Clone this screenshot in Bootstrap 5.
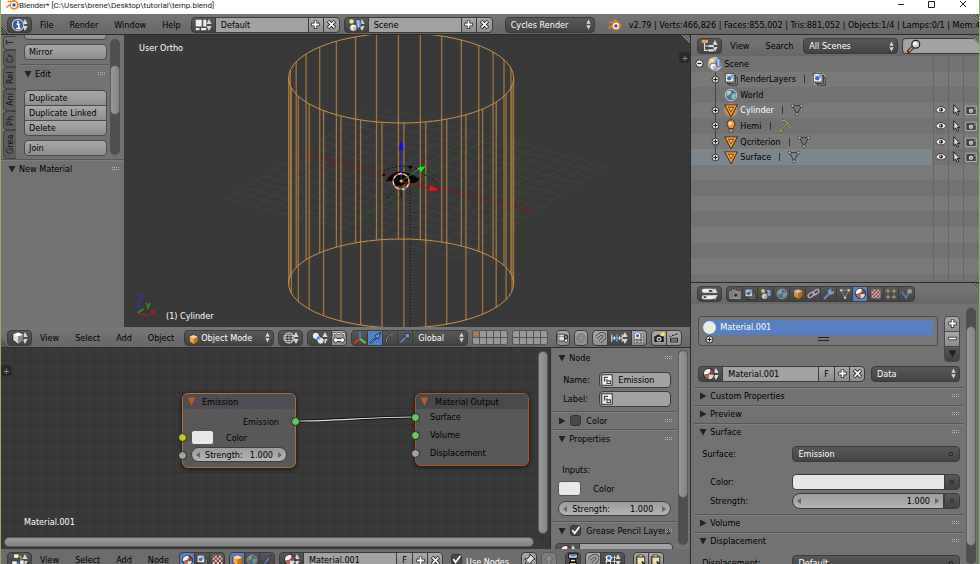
<!DOCTYPE html>
<html lang="en">
<head>
<meta charset="utf-8">
<meta name="viewport" content="width=device-width, initial-scale=1">
<title>Blender</title>
<link href="https://cdn.jsdelivr.net/npm/bootstrap@5.3.0/dist/css/bootstrap.min.css" rel="stylesheet">
<style>
:root{--panel:#727272;--dark:#393939;--edge:#2b2b2b;
--updown:url("data:image/svg+xml,%3Csvg xmlns='http://www.w3.org/2000/svg' viewBox='0 0 6 12'%3E%3Cpath d='M3 0 5.6 5H.4zM3 12 .4 7h5.2z' fill='%23d8d8d8'/%3E%3C/svg%3E");
--tick:url("data:image/svg+xml,%3Csvg xmlns='http://www.w3.org/2000/svg' viewBox='0 0 12 12'%3E%3Cpath d='M2.500 5.500 5 9l6-8' fill='none' stroke='%23fff' stroke-width='1.8'/%3E%3C/svg%3E");
--grip:url("data:image/svg+xml,%3Csvg xmlns='http://www.w3.org/2000/svg' width='8' height='4' shape-rendering='crispEdges'%3E%3Cpath d='M0 0h1v1H0zM2 0h1v1H2zM4 0h1v1H4zM6 0h1v1H6zM0 2h1v1H0zM2 2h1v1H2zM4 2h1v1H4zM6 2h1v1H6z' fill='%23b4b4b4'/%3E%3C/svg%3E")}
body{height:100vh;overflow:hidden;background:var(--panel);color:#000;font:9px/12px "DejaVu Sans Condensed","DejaVu Sans",sans-serif;border-left:1px solid #8fb35c;border-right:1px solid #8fb35c}
svg{display:block;flex:none}
.ic{width:14px;height:14px}
.titlebar{height:14px;background:#fff;font:8px/11px Roboto,"Open Sans",sans-serif;color:#222;overflow:hidden}
.logo{margin-top:-3px}
.winbtn{border:0;background:none;padding:0;width:31px;height:12px}
.hdr{height:21px;background:linear-gradient(#767676,#686868);border-bottom:1px solid var(--edge);padding:1px 6px 0;white-space:nowrap;overflow:hidden;position:relative}
.hdr.cut{height:15px;align-items:flex-start!important;padding-top:3px;border:0;background:#6c6c6c}
.menu{gap:16px;margin:0 10px 0 8px}
.menu a{color:#000;text-decoration:none;line-height:16px}
.bl{height:16px;border:1px solid #3c3c3c;border-radius:4px;padding:0 5px;background:linear-gradient(#a9a9a9,#8e8e8e);color:#000;font:inherit;line-height:14px;text-align:left;display:flex;align-items:center;min-width:0;flex:none}
.bl.sq{width:16px;padding:0;justify-content:center}
.bl.nar{width:14px}
.bl.wd{width:17px}
.bl.dk{background:linear-gradient(#585858,#434343);color:#fff}
.bl.on{background:#5680c2}
.bl.off{background:#7c7c7c;border-color:#5a5a5a}
.bl.ed{width:25px;padding:0 2px 0 3px;justify-content:space-between;background:var(--updown) right 3px center/6px 12px no-repeat,linear-gradient(#585858,#434343)}
select.bl{appearance:none;color:#fff;background:var(--updown) right 3px center/5px 11px no-repeat,linear-gradient(#585858,#434343);display:block}
.bl.grow{flex:1 1 0}
.w-name{width:94px}.w-mode{width:90px}.w-orient{width:56px}.w-all{width:95px}.w-data{width:34%}
select.w-mode.icn{padding-left:16px}
.fld{background:#a2a2a2}
.grp{display:flex;flex:none}
.grp>.bl{border-radius:0;margin-right:-1px}
.grp>.bl:first-child{border-radius:4px 0 0 4px}
.grp>.bl:last-child{border-radius:0 4px 4px 0;margin-right:0}
.gap12{margin-left:12px}
.cover{flex:1 1 0;min-width:0;min-height:0}
.leftcol{flex:690 1 0;min-width:0}
.rightcol{flex:288 1 0;min-width:0;border-left:1px solid var(--edge)}
.area3d{flex:292 1 0;min-height:0}
.areanode{flex:201 1 0;min-height:0}
.areatree{flex:247 1 0;min-height:0}
.areaprops{flex:282 1 0;min-height:0;border-top:1px solid var(--edge)}
.shelf{width:123px;flex:none;background:var(--panel)}
.tools{height:124px;overflow:hidden}
.vtabs{width:15px;padding:1px 0 0 2px}
.vtab{writing-mode:vertical-rl;transform:rotate(180deg);border:1px solid #444;border-left:0;border-radius:0 4px 4px 0;background:#5d5d5d;color:#111;padding:0;width:13px;height:17px;flex:none;text-align:center;font:inherit;line-height:11px}
.vtab.active{background:var(--panel);height:14px}
.vtab.h22{height:22px}.vtab.h19{height:19px}.vtab.h28{height:29px}
.stackb{width:83px}
.stackb .bl{width:100%;border-radius:0;margin-bottom:-1px;border-color:#4a4a4a}
.stackb .bl:first-child{border-radius:4px 4px 0 0}
.stackb .bl:last-child{border-radius:0 0 4px 4px;margin-bottom:0}
.stackb .bl:only-child{border-radius:4px}
.stackb.first{margin-top:-11px}
.stackb.sm{width:16px}
.stackb:not(.sm) .bl{padding-left:4px}
.sb{width:10px;border-radius:5px;background:#4f4f4f;flex:none}
.th{background:linear-gradient(90deg,#989898,#848484);border-radius:5px;border:1px solid #5b5b5b}
.th.h{background:linear-gradient(#989898,#848484)}
.th.t1{margin-top:26px;height:50px}
.th.t2{height:76%}
.th.t3{margin-top:18px;height:86%}
.ph{height:18px;display:flex;align-items:center;gap:3px;border-top:1px solid #575757;box-shadow:inset 0 1px 0 #7e7e7e;padding:0 4px 0 7px;white-space:nowrap}
.ph.no{border-color:transparent;box-shadow:none}
.pbody .ph{padding-left:5px}
.ph .cb{margin:0 2px 0 1px}
.tri{width:8px;height:8px}
.dots{width:8px;height:4px;margin-left:auto;background:var(--grip)}
.view3d{background:var(--dark);position:relative;overflow:hidden;color:#fff}
.lbl{position:absolute;color:#fff}
.lbl.top{left:15px;top:7px}.lbl.obj{left:42px;bottom:5px}.lbl.mat{left:23px;bottom:21px}
.tagplus{position:absolute;width:11px;height:11px;background:#2a2a2a;color:#999;border:0;padding:0;line-height:10px;font-size:9px;border-radius:3px;top:17px}
.canvas{background-color:var(--dark);background-image:linear-gradient(90deg,#333 1px,transparent 1px),linear-gradient(#333 1px,transparent 1px);background-size:16px 16px;background-position:13px 12px;position:relative;overflow:hidden}
.node{position:absolute;top:45px;width:114px;border:1px solid #b0702f;border-radius:6px;background:#5a5a5aee;box-shadow:0 1px 4px #111}
.node.n1{left:181px;height:75px}.node.n2{left:414px;height:73px;border-color:#b4541c}
.node .nt{height:15px;border-radius:5px 5px 0 0;background:#4f4c53;padding-left:4px;gap:6px}
.node .nt.o{background:#494949}
.node .nt svg{width:9px;height:9px}
.nbody{display:flex;flex-direction:column;gap:2px;padding:7px 8px 0}
.nbody.o{gap:6px;padding:2px 14px 0}
.sock{position:absolute;left:-5px;width:9px;height:9px;border-radius:50%;border:1px solid #222;background:#63c763}
.sock.out{left:108px}
.sock.y{background:#c7c729}.sock.g{background:#a1a1a1}
.s1{top:23px}.s2{top:39px}.s3{top:57px}.o1{top:19px}.o2{top:37px}.o3{top:55px}
.vbar{right:2px;top:3px;bottom:15px;width:10px}.hbar{left:3px;right:16px;bottom:2px;height:10px}
.pill{height:15px;border:1px solid #3c3c3c;border-radius:8px;background:linear-gradient(#9c9c9c,#b4b4b4);display:flex;align-items:center;padding:0 4px;min-width:0;gap:5px}
.pill.half{height:16px;border-radius:8px 0 0 8px}
.pill input{border:0;background:none;padding:0;font:inherit;color:#000;text-align:right;flex:1 1 0;width:0;min-width:0}
.pill svg{width:4px;height:6px}
.sw{border:1px solid #555;border-radius:3px;background:#e8e8e8;width:23px;height:15px;padding:0;flex:none}
.nside{width:127px;flex:none;border-left:1px solid var(--edge);overflow:hidden;background:var(--panel)}
.nfields{display:flex;flex-direction:column;gap:3px;padding:6px 6px 4px 12px}
.nfields label{width:36px;flex:none}
.nfields .bl{padding:0}
.ninputs{display:flex;flex-direction:column;gap:5px;padding:17px 6px 5px 7px}
.nsb{width:13px;flex:none;background:var(--panel);padding:2px 2px 4px 1px}
.cb{appearance:none;width:11px;height:11px;border-radius:3px;background:#484848;border:1px solid #333;margin:0;flex:none}
.cb:checked{background:#484848 var(--tick) center/11px no-repeat}
.cut .cb{margin-top:2px}
.orow{flex:2 1 0;min-height:0;padding-left:4px;position:relative}
.orow.kid{padding-left:20px}
.orow.kid::before{content:"";position:absolute;left:24px;top:0;bottom:0;border-left:1px solid #444}
.orow.kid .ex+.ic{margin-left:4px}
.orow.last::before{bottom:50%}
.orow:nth-child(even){background:#797979}
.orow.sel{background:linear-gradient(90deg,#7b868d calc(100% - 47px),#727272 0)}
.orow.half{flex:1 1 0}
.orow .cell{width:15px;align-self:stretch;display:flex;align-items:center;justify-content:center;flex:none;background:none;border:solid #656565;border-width:0 0 0 1px;padding:0}
.orow .cell svg{width:12px;height:12px}
.cells{margin-left:auto;display:flex;align-self:stretch;padding-right:1px}
.orow .bar{width:1px;height:8px;background:#333;margin:0 7px 0 8px}
.orow a{color:#000;text-decoration:none;margin-left:2px}
.orow .ex{width:9px;height:9px;position:relative}
.pbody{flex:1 1 0;min-width:0;padding-left:3px}
.slots{padding:12px 4px 0;gap:6px}
.matrow{padding:4px 4px 5px;gap:6px}
.listbox{border:1px solid #4a4a4a;border-radius:4px;background:#767676;padding:3px 4px 0 6px;height:30px}
.item{background:#5680c2;color:#fff;height:15px;border-radius:2px}
.ball{width:13px;height:13px;border-radius:50%;background:#e9e9e9;margin-left:-2px}
.lines{width:11px;height:4px;border:solid #222;border-width:1px 0}
.frows{display:flex;flex-direction:column;padding:5px 4px 5px 8px;gap:3px}
.frow{height:16px;display:flex;align-items:center}
.frow.sp{margin-top:9px}
.fl{flex:0 0 35%}
.bl.white{background:#e6e6e6}
.psb{margin:4px 3px 0 2px}
.gripc{position:absolute;width:9px;height:9px;background:repeating-linear-gradient(45deg,#444 0 1px,#808080 1px 2px)}
.gripc.tr{top:0;right:0;clip-path:polygon(0 0,100% 0,100% 100%)}
.gripc.bl0{bottom:0;left:0;clip-path:polygon(0 0,100% 100%,0 100%)}
.layers{display:grid;grid-template-columns:repeat(5,6px);grid-auto-rows:6px;gap:1px;border-radius:3px;background:#555;border:1px solid #555;overflow:hidden}
.layers button{background:#999;border:0;padding:0}
.layers .act{background:radial-gradient(circle,#d8701a 0 1px,#7e7e7e 3px)}
</style>
</head>
<body class="d-flex flex-column">
<svg width="0" height="0" class="position-absolute" aria-hidden="true">
<defs>
<symbol id="plus" viewBox="0 0 16 16"><path d="M8 2v12M2 8h12" stroke="#222" stroke-width="5"/><path d="M8 3v10M3 8h10" stroke="#fff" stroke-width="2.6"/></symbol>
<symbol id="minus" viewBox="0 0 16 16"><path d="M2 8h12" stroke="#222" stroke-width="5"/><path d="M3 8h10" stroke="#fff" stroke-width="2.6"/></symbol>
<symbol id="ex" viewBox="0 0 16 16"><path d="m3 3 10 10M13 3 3 13" stroke="#222" stroke-width="5"/><path d="m3.600 3.600 8.800 8.800M12.400 3.600l-8.800 8.800" stroke="#fff" stroke-width="2.500"/></symbol>
<symbol id="info" viewBox="0 0 16 16"><circle cx="8" cy="8" r="6.500" fill="#3c5a94" stroke="#c9d3e6" stroke-width="1.200"/><path d="M8 3.200v2.200M6.500 7H9v4.500M6 12h5" stroke="#fff" stroke-width="1.800" fill="none"/></symbol>
<symbol id="layout" viewBox="0 0 16 16"><path d="M1 1h8v9H1zM11 1h4v9h-4zM1 12h5v3H1zM8 12h7v3H8z" fill="#eee"/></symbol>
<symbol id="scene" viewBox="0 0 16 16"><circle cx="4" cy="4" r="2.600" fill="#f4e27a"/><path d="m9 3 3-1.500 3 1.500v7l-3 1.500L9 10z" fill="#6f9bd6" stroke="#223" stroke-width=".6"/><path d="m9 3 3 1v7" fill="none" stroke="#cde"/><circle cx="6" cy="11" r="4" fill="#f2f2f2" stroke="#333" stroke-width=".7"/><circle cx="7.500" cy="12" r="2" fill="#bbb"/></symbol>
<symbol id="scenec" viewBox="0 0 16 16"><circle cx="8" cy="8" r="8" fill="#c4c4c4"/><use href="#scene" width="16" height="16"/></symbol>
<symbol id="blender" viewBox="0 0 16 16"><path d="M1 11.500 7.500 6H3V4.200h6L7 2.500 8.500 1.200l6 4.600c3 3 .8 8.400-4 8.400-3 0-5-2-5-4l-3 2.500z" fill="#ee7d1b"/><circle cx="10.200" cy="9" r="3.500" fill="#fff"/><circle cx="10.200" cy="9" r="2" fill="#1f5fa8"/></symbol>
<symbol id="tree" viewBox="0 0 16 16"><path d="M4 4v9h5M4 8h5" fill="none" stroke="#ddd" stroke-width="1.200"/><path d="M1 1h7v3.500H1z" fill="#f0a050"/><path d="M8 6.500h7v3H8zM8 11.500h7v3H8z" fill="#eee" stroke="#111" stroke-width=".5"/></symbol>
<symbol id="mag" viewBox="0 0 16 16"><path d="M7.500 8.500 2 14" stroke="#222" stroke-width="4" stroke-linecap="round"/><path d="M7 9l-4.500 4.500" stroke="#c98550" stroke-width="2.200" stroke-linecap="round"/><circle cx="10" cy="6" r="4.500" fill="#d5d5d5" stroke="#222" stroke-width="1.400"/><circle cx="9" cy="5" r="1.800" fill="#fff"/></symbol>
<symbol id="rl" viewBox="0 0 16 16"><path d="M6 6h9v9H6z" fill="#999" stroke="#222"/><path d="M4 4h9v9H4z" fill="#bbb" stroke="#222"/><path d="M1.500 1.500h10v10h-10z" fill="#e9eef5" stroke="#333"/><circle cx="6" cy="7" r="2.500" fill="#3b6fae"/><path d="m7 3 3-.5V8z" fill="#5d94d8"/><circle cx="3.500" cy="3.500" r="1" fill="#e8c030"/></symbol>
<symbol id="rlc" viewBox="0 0 16 16"><circle cx="8" cy="8" r="8" fill="#a9a9a9"/><use href="#rl" width="16" height="16"/></symbol>
<symbol id="world" viewBox="0 0 16 16"><circle cx="8" cy="8" r="6.500" fill="#4c76a8" stroke="#c9d6e4"/><path d="M4 3.500 8 3 7 7 4 9 2.500 7zM9 7l4-1 .5 3-3 4-2-2z" fill="#9fc08f"/><circle cx="6" cy="5" r="2" fill="#fff" opacity=".35"/></symbol>
<symbol id="mesh" viewBox="0 0 16 16"><path d="M3 3.500h10L8 13z" fill="none" stroke="#3b2000" stroke-width="3.600"/><path d="M3 3.500h10L8 13z" fill="#6b4522" stroke="#f59a3c" stroke-width="1.800"/><path d="M6 5.500h4L8 9z" fill="#f7c080"/></symbol>
<symbol id="meshc" viewBox="0 0 16 16"><circle cx="8" cy="8" r="8" fill="#c08a50"/><use href="#mesh" width="16" height="16"/></symbol>
<symbol id="meshd" viewBox="0 0 16 16"><path d="M3 3h10L8 13z" fill="none" stroke="#2b2b2b" stroke-width="1"/><g fill="#bbb" stroke="#222" stroke-width=".7"><circle cx="3" cy="3" r="1.700"/><circle cx="13" cy="3" r="1.700"/><circle cx="8" cy="13" r="1.700"/></g></symbol>
<symbol id="lamp" viewBox="0 0 16 16"><path d="M8 1c3 0 4.500 2 4.500 4.500S10.500 9 10.500 11h-5C5.500 9 3.500 8 3.500 5.500S5 1 8 1z" fill="#ef9b42" stroke="#3b2000"/><path d="M6 11.500h4V15H6z" fill="#d8a070" stroke="#333" stroke-width=".7"/><circle cx="7" cy="5" r="1.800" fill="#ffe0b0"/></symbol>
<symbol id="hemi" viewBox="0 0 16 16"><path d="M4 2c6-1 10 4 10 10M2 14l9-9M2 10v4h4" fill="none" stroke="#4b4630" stroke-width="2.400"/><path d="M4 2c6-1 10 4 10 10M2 14l9-9M2 10v4h4" fill="none" stroke="#b4a860" stroke-width="1.200"/></symbol>
<symbol id="eye" viewBox="0 0 16 16"><path d="M1 8c3-6 11-6 14 0-3 5-11 5-14 0z" fill="#eee" stroke="#222"/><circle cx="8" cy="7.500" r="2.600" fill="#222"/><circle cx="7.200" cy="7" r="1" fill="#fff"/></symbol>
<symbol id="cursor" viewBox="0 0 16 16"><path d="M5 1v12l2.500-2.500L9.500 15l2-1-2-4H13z" fill="#ddd" stroke="#111" stroke-width="1.200"/></symbol>
<symbol id="cam" viewBox="0 0 16 16"><path d="M1 3h14v11H1z" fill="#444" stroke="#ccc" stroke-width="1"/><circle cx="8" cy="9" r="3.600" fill="#ddd" stroke="#111"/><circle cx="8" cy="9" r="1.600" fill="#b88"/><path d="M12 5h2v2h-2z" fill="#d88"/></symbol>
<symbol id="cam2" viewBox="0 0 16 16"><path d="M1 5h3l1-2h4l1 2h5v9H1z" fill="#777" stroke="#bbb" stroke-width=".8"/><circle cx="9" cy="9.500" r="3.200" fill="#333" stroke="#ccc"/></symbol>
<symbol id="cube" viewBox="0 0 16 16"><path d="m2 4 6-2.500L14 4v6.500L8 15l-6-4.500z" fill="#ddd" stroke="#111"/><path d="m8 6 6-2v6.500L8 15z" fill="#888"/><path d="m2 4 6 2 6-2-6-2.500z" fill="#fff"/></symbol>
<symbol id="ocube" viewBox="0 0 16 16"><path d="m2 4 6-2.500L14 4v7l-6 4-6-4z" fill="#f4a64e" stroke="#4a2a08"/><path d="m8 6.500 6-2.500v7l-6 4z" fill="#c87320"/><path d="m2 4 6 2.500L14 4 8 1.500z" fill="#ffd9a0"/></symbol>
<symbol id="wire" viewBox="0 0 16 16"><circle cx="8" cy="8" r="5.800" fill="#333" stroke="#ddd" stroke-width="1.100"/><path d="M8 2v12M2 8h12M5.500 3c-2 3-2 7 0 10M10.500 3c2 3 2 7 0 10M3 5h10M3 11h10" fill="none" stroke="#ddd" stroke-width=".8"/></symbol>
<symbol id="pivot" viewBox="0 0 16 16"><circle cx="5.500" cy="5.500" r="4.200" fill="#eee" stroke="#222"/><circle cx="11" cy="11" r="4.200" fill="#ddd" stroke="#222"/><circle cx="8.200" cy="8.200" r="2.200" fill="#3f7fe0" stroke="#fff" stroke-width=".6"/></symbol>
<symbol id="manip" viewBox="0 0 16 16"><path d="M2 6V3h3M14 6V3h-3M6.500 3h3" fill="none" stroke="#222" stroke-width="2.600"/><path d="M2 6V3h3M14 6V3h-3M6.500 3h3" fill="none" stroke="#eee" stroke-width="1.200"/><path d="m1 10 3-3 1.500 1.500h5L12 7l3 3-3 4-2-2H6l-2 2z" fill="#eee" stroke="#222" stroke-width="1.100"/></symbol>
<symbol id="axis" viewBox="0 0 16 16"><path d="M8 9V1" stroke="#3f7ff0" stroke-width="2"/><path d="m8 9-6.500 5" stroke="#e03020" stroke-width="2.400"/><path d="m8 9 6.500 5" stroke="#58d030" stroke-width="2.400"/></symbol>
<symbol id="arrowt" viewBox="0 0 16 16"><path d="m1 14 8-6-2-2 7.500-4.500L11.500 10l-2-1.500-6.500 7z" fill="#6d9be8" stroke="#0e2447"/></symbol>
<symbol id="arc" viewBox="0 0 16 16"><path d="M3 14C3 8 6 3 14 2" fill="none" stroke="#222" stroke-width="3"/><path d="M3 14C3 8 6 3 14 2" fill="none" stroke="#6d93c8" stroke-width="1.600"/></symbol>
<symbol id="scl" viewBox="0 0 16 16"><path d="m2 14 7-7" stroke="#6d93c8" stroke-width="1.600"/><path d="M8 2h6v6H8z" fill="#6d93c8" stroke="#1c2b44"/></symbol>
<symbol id="lock" viewBox="0 0 16 16"><path d="M1 3h9v9H1z" fill="#ddd" stroke="#222"/><path d="M3 3v9M1 6h9" stroke="#777"/><rect x="10" y="4" width="4" height="5" rx="2" fill="none" stroke="#222" stroke-width="1.500"/><rect x="10" y="9" width="4" height="5" rx="2" fill="#eee" stroke="#222"/></symbol>
<symbol id="prop" viewBox="0 0 16 16"><circle cx="8" cy="8" r="6" fill="#8e8e8e" stroke="#707070"/><circle cx="8" cy="8" r="3" fill="#999" stroke="#6b6b6b"/></symbol>
<symbol id="magnet" viewBox="0 0 16 16"><path d="M3 7 8 3c4-3 8 2 5 5l-5 5" fill="none" stroke="#333" stroke-width="4.500"/><path d="M3 7 8 3c4-3 8 2 5 5l-5 5" fill="none" stroke="#aaa" stroke-width="2.600"/></symbol>
<symbol id="sinc" viewBox="0 0 16 16"><path d="M1 3v10M15 3v10M1 8h14M4.500 5.500v5M11.500 5.500v5" stroke="#ddd" stroke-width="1.400"/><path d="M8 3v10" stroke="#4a8df0" stroke-width="2.400"/></symbol>
<symbol id="sgrid" viewBox="0 0 16 16"><path d="M3 2v13M8 2v13M13 2v13M1 4h14M1 9h14M1 13h14" stroke="#222" stroke-width="2.400"/><path d="M3 2v13M8 2v13M13 2v13M1 4h14M1 9h14M1 13h14" stroke="#ddd" stroke-width="1.200"/><circle cx="6" cy="5" r="3.600" fill="#fff"/><circle cx="6" cy="5" r="2.200" fill="#2a6fd0"/></symbol>
<symbol id="shot" viewBox="0 0 16 16"><path d="M1 5h3l1-2h4l1 2h5v9H1z" fill="#222" stroke="#ddd" stroke-width=".7"/><circle cx="8" cy="9.500" r="3.300" fill="#ccc"/><circle cx="8" cy="9.500" r="1.600" fill="#733"/><circle cx="13" cy="3" r="2.600" fill="#ffe050"/></symbol>
<symbol id="clap" viewBox="0 0 16 16"><path d="M2 7h12v7.500H2zM1 5l12-4 .8 2.400-12 4z" fill="#222" stroke="#ddd" stroke-width=".7"/><path d="m4 4 2 2m2-3.500 2 2M4 9.500h8M4 12h8" stroke="#ddd"/></symbol>
<symbol id="props" viewBox="0 0 16 16"><rect x="1" y="2" width="14" height="4.600" rx="2.300" fill="#eee"/><rect x="1" y="9.400" width="14" height="4.600" rx="2.300" fill="#eee"/><path d="M9 4.300h4M3 11.700h3" stroke="#333" stroke-width="2"/></symbol>
<symbol id="chain" viewBox="0 0 16 16"><g fill="none" stroke="#b0b0b0" stroke-width="1.600"><rect x="1" y="7.500" width="8" height="4.500" rx="2.200" transform="rotate(-35 5 9.700)"/><rect x="7" y="4" width="8" height="4.500" rx="2.200" transform="rotate(-35 11 6.200)"/></g></symbol>
<symbol id="wrench" viewBox="0 0 16 16"><path d="m2 14 7-7" stroke="#6c8db9" stroke-width="2.600" stroke-linecap="round"/><path d="M14.500 4a4 4 0 1 1-3-3L10.500 3.500l1.500 1.500z" fill="#7d9fcb"/></symbol>
<symbol id="meshl" viewBox="0 0 16 16"><path d="M3 3h10L8 13z" fill="none" stroke="#999" stroke-width="1"/><g fill="#ccc"><circle cx="3" cy="3" r="1.600"/><circle cx="13" cy="3" r="1.600"/><circle cx="8" cy="13" r="1.600"/></g></symbol>
<symbol id="mat" viewBox="0 0 16 16"><circle cx="8" cy="8" r="6.200" fill="#8c4a42" stroke="#222"/><path d="M8 14A6 6 0 0 0 13.500 9L8 8.500z" fill="#ddd"/><path d="M2.300 8.500C2 4 5 2 9 2.300c1.500 3-.5 6.200-6.700 6.200z" fill="#f4f4f4"/><path d="M3 9c2 .3 4 0 5-1v5.800C5.500 13.800 3.500 12 3 9z" fill="#b06a60"/></symbol>
<symbol id="tex" viewBox="0 0 16 16"><path d="M1 1h14v14H1z" fill="#d6c5c2"/><path d="M1 1h3v3H1zM7 1h3v3H7zM4 4h3v3H4zM10 4h3v3h-3zM1 7h3v3H1zM7 7h3v3H7zM13 7h2v3h-2zM4 10h3v3H4zM10 10h3v3h-3zM13 1h2v3h-2zM7 13h3v2H7zM1 13h3v2H1zM13 13h2v2h-2z" fill="#7a3a38"/></symbol>
<symbol id="part" viewBox="0 0 16 16"><path d="M4 1v6M1 4h6M12 1v6M9 4h6M4 9v6M1 12h6M12 9v6M9 12h6" stroke="#b8ad80" stroke-width="1.200"/></symbol>
<symbol id="phys" viewBox="0 0 16 16"><path d="m1 5 6 8 3-7" fill="none" stroke="#5a7dac" stroke-width="2.200"/><circle cx="11.500" cy="4.500" r="3.300" fill="#999"/></symbol>
<symbol id="nodes" viewBox="0 0 16 16"><path d="M5 12c5 0 7-1 7-6" fill="none" stroke="#5b8ee0" stroke-width="1.600"/><path d="M8 3c4 0 3 2 4 5" stroke="#e8a030" fill="none" stroke-width="1.500"/><path d="M3 1h6v5H3zM10 8h5v5h-5zM1 9h6v5H1z" fill="#eee" stroke="#222" stroke-width=".7"/></symbol>
<symbol id="brush" viewBox="0 0 16 16"><path d="M14.500 1 7 7l-3 5-2 2.500 4-1.500 3.500-3.500z" fill="#6e90bd" stroke="#1c2b44"/></symbol>
<symbol id="pin" viewBox="0 0 16 16"><path d="m9 1 6 6-2 .5-3 3 .2 3L7 11l-5 4.500 3.500-6L3 6.500l3 .2 2.700-3z" fill="#ddd" stroke="#222" stroke-width="1.100"/></symbol>
<symbol id="up" viewBox="0 0 16 16"><path d="m8 2 5.500 6H10v6H6V8H2.500z" fill="#8b8b8b" stroke="#666"/></symbol>
<symbol id="bot" viewBox="0 0 16 16"><path d="M3 1h10v5H3zM5 7h6v3H5zM4 11h8v4H4z" fill="#eee" stroke="#111" stroke-width="1.300"/><path d="M5 3h6" stroke="#3f7fe0" stroke-width="2"/><path d="M6 13h4" stroke="#e8b030" stroke-width="2"/></symbol>
<symbol id="paste" viewBox="0 0 16 16"><path d="M2 3h11v12H2z" fill="#a88a50" stroke="#222"/><path d="M4 5h8v8H4z" fill="#eadfb8"/><path d="M5 1h5v3H5z" fill="#ccc" stroke="#222" stroke-width=".8"/><path d="m9 10 5 5" stroke="#111" stroke-width="2"/></symbol>
<symbol id="nname" viewBox="0 0 16 16"><path d="M2 2h12v12H2z" fill="#f4f4f4" stroke="#333" stroke-width="1.200"/><path d="M5 10V5h4M6 8h3M8 8v4h4V9H9" fill="none" stroke="#444" stroke-width="1.300"/></symbol>
<symbol id="dn" viewBox="0 0 8 8"><path d="M.5 1h7L4 7.500z" fill="#222"/></symbol>
<symbol id="rt" viewBox="0 0 8 8"><path d="M1 .5v7L7.500 4z" fill="#222"/></symbol>
<symbol id="odn" viewBox="0 0 8 8"><path d="M.8 .5h6.400L4 7.800z" fill="#c8581a"/></symbol>
<symbol id="al" viewBox="0 0 4 6"><path d="M4 0v6L0 3z" fill="#666"/></symbol>
<symbol id="ar" viewBox="0 0 4 6"><path d="M0 0v6l4-3z" fill="#666"/></symbol>
<symbol id="cp" viewBox="0 0 9 9"><circle cx="4.500" cy="4.500" r="3.400" fill="#ddd" stroke="#222" stroke-width=".9"/><path d="M4.500 2.500v4M2.500 4.500h4" stroke="#111"/></symbol>
<symbol id="cm" viewBox="0 0 9 9"><circle cx="4.500" cy="4.500" r="3.700" fill="#eee" stroke="#222" stroke-width=".9"/><path d="M2.500 4.500h4" stroke="#111" stroke-width="1.300"/></symbol>
<symbol id="ring" viewBox="0 0 6 6"><circle cx="3" cy="3" r="1.700" fill="none" stroke="#222" stroke-width=".9"/></symbol>
</defs></svg>

<header class="titlebar d-flex align-items-start flex-shrink-0 ps-1">
  <svg class="ic logo"><use href="#blender"/></svg>
  <span>Blender* [C:\Users\brene\Desktop\tutorial\temp.blend]</span>
  <span class="ms-auto d-flex">
    <button class="winbtn" aria-label="Minimize"><svg width="31" height="12"><path d="M12 4.500h6" stroke="#333"/></svg></button>
    <button class="winbtn" aria-label="Maximize"><svg width="31" height="12"><path d="M11.500 1.500h6v6h-6z" fill="none" stroke="#222"/></svg></button>
    <button class="winbtn" aria-label="Close"><svg width="31" height="12"><path d="m12 1 6 6M18 1l-6 6" stroke="#222"/></svg></button>
  </span>
</header>

<div class="hdr d-flex align-items-center flex-shrink-0">
  <button class="bl ed" aria-label="Editor type"><svg class="ic"><use href="#info"/></svg></button>
  <nav class="menu d-flex"><a href="#">File</a><a href="#">Render</a><a href="#">Window</a><a href="#">Help</a></nav>
  <div class="grp me-1"><button class="bl ed" aria-label="Screen"><svg width="12" height="12"><use href="#layout"/></svg></button><input class="bl fld w-name" value="Default" aria-label="Screen name"><button class="bl sq" aria-label="Add"><svg width="11" height="11"><use href="#plus"/></svg></button><button class="bl sq wd" aria-label="Delete"><svg width="11" height="11"><use href="#ex"/></svg></button></div>
  <div class="grp"><button class="bl ed" aria-label="Scene"><svg class="ic"><use href="#scene"/></svg></button><input class="bl fld w-name" value="Scene" aria-label="Scene name"><button class="bl sq" aria-label="Add"><svg width="11" height="11"><use href="#plus"/></svg></button><button class="bl sq wd" aria-label="Delete"><svg width="11" height="11"><use href="#ex"/></svg></button></div>
  <select class="bl w-mode gap12" aria-label="Engine"><option>Cycles Render</option></select>
  <svg class="ic gap12 me-1"><use href="#blender"/></svg>
  <span class="ms-1">v2.79 | Verts:466,826 | Faces:855,002 | Tris:881,052 | Objects:1/4 | Lamps:0/1 | Mem:412.52M</span>
  <i class="gripc tr"></i><i class="gripc bl0"></i>
</div>

<main class="cover d-flex">
<section class="leftcol d-flex flex-column">
  <div class="area3d d-flex">
    <aside class="shelf">
      <div class="tools d-flex">
        <div class="vtabs d-flex flex-column flex-shrink-0">
          <button class="vtab active">T</button><button class="vtab">Cr</button><button class="vtab h22">Rel</button><button class="vtab h22">Ani</button><button class="vtab h19">Ph</button><button class="vtab h28">Grea</button>
        </div>
        <div class="flex-grow-1 ps-1">
          <div class="stackb ms-1 first"><button class="bl">Scale</button></div>
          <div class="stackb ms-1 mt-1 mb-1"><button class="bl">Mirror</button></div>
          <div class="ph ps-1"><svg class="tri"><use href="#dn"/></svg>Edit<i class="dots"></i></div>
          <div class="stackb ms-1 mt-2"><button class="bl">Duplicate</button><button class="bl">Duplicate Linked</button><button class="bl">Delete</button></div>
          <div class="stackb ms-1 mt-1 mb-1"><button class="bl">Join</button></div>
          <div class="ph"></div>
        </div>
        <div class="sb mt-1 mb-1 me-1"><div class="th t1"></div></div>
      </div>
      <div class="ph"><svg class="tri"><use href="#dn"/></svg>New Material<i class="dots"></i></div>
    </aside>
    <div class="view3d cover">
      <svg class="w-100 h-100" viewBox="124 35 567 292" preserveAspectRatio="xMidYMid slice">
        <g id="floor" stroke="#424242" stroke-width="1"></g>
        <path d="M300 152 534 212" stroke="#7c1616"/><path d="M343 229 491 136" stroke="#1f5f1f"/>
        <path d="M410.500 170v157" stroke="#111" stroke-dasharray="1 2"/>
        <g id="cyl" fill="none" stroke="#b9833f" stroke-width="1.300" stroke-opacity=".8"></g>
        <g fill="none" stroke="#cf8f46" stroke-width="1"><ellipse cx="401.500" cy="78" rx="112.500" ry="45"/><ellipse cx="401.500" cy="283.500" rx="112.500" ry="44.500"/></g>
        <g fill="#050505"><path d="M386 182c3-6 7-9 12-10 8-1 13 2 22 7-2 4-10 6-14 4-5 5-10 4-12-1-3-2-6-1-8 0z"/><circle cx="410.500" cy="167" r="1.700"/><circle cx="384" cy="175" r="1.300"/></g>
        <path d="M384 171c10-5 24-7 34-2M425 175c6 2 10 6 13 10M388 198c2-4 6-7 9-9" fill="none" stroke="#111" stroke-dasharray="2 2"/>
        <path d="M401.500 181v-32" stroke="#2020d0"/><path d="M401.500 140l2.500 10h-5z" fill="#0b0bff"/>
        <path d="m402 181 16-11" stroke="#18a018"/><path d="m426 166-4.500 6-4-4z" fill="#10f010"/>
        <path d="m402 181 30 8" stroke="#b01010"/><path d="m439 190-9.500.8 1.500-5z" fill="#ff1010"/>
        <circle cx="401.500" cy="181.500" r="8" fill="none" stroke="#f4f4f4" stroke-width="1.300"/><circle cx="401.500" cy="181.500" r="8" fill="none" stroke="#e03030" stroke-width="1.300" stroke-dasharray="3.100 3.200"/>
        <path d="M401.500 189v8" stroke="#111"/><circle cx="401.500" cy="181" r="1.600" fill="#ff9a30"/>
        <g fill="none" stroke-width="1.200"><path d="M138.500 313v-12M139.500 295.500h3.500l-3.500 4h3.500" stroke="#3030d8"/><path d="m138 313 6-4M146.500 303l2 3m2-3-3 6" stroke="#20b020"/><path d="m138 313 11 3M151 310l4 4.500m0-4.500-4 4.500" stroke="#c01818"/></g>
      </svg>
      <span class="lbl top">User Ortho</span>
      <span class="lbl obj">(1) Cylinder</span>
      <button class="tagplus end-0">+</button><i class="gripc tr"></i>
    </div>
  </div>

  <div class="hdr d-flex align-items-center flex-shrink-0">
    <button class="bl ed" aria-label="Editor type"><svg class="ic"><use href="#cube"/></svg></button>
    <nav class="menu d-flex"><a href="#">View</a><a href="#">Select</a><a href="#">Add</a><a href="#">Object</a></nav>
    <div class="position-relative me-1"><select class="bl w-mode icn" aria-label="Mode"><option>Object Mode</option></select><svg class="position-absolute top-0 start-0 mt-1 ms-1" width="11" height="11"><use href="#ocube"/></svg></div>
    <button class="bl ed me-1" aria-label="Shading"><svg class="ic"><use href="#wire"/></svg></button>
    <div class="grp me-1"><button class="bl ed" aria-label="Pivot"><svg class="ic"><use href="#pivot"/></svg></button><button class="bl sq" aria-label="Centers"><svg class="ic"><use href="#manip"/></svg></button></div>
    <div class="grp me-1"><button class="bl sq dk wd" aria-label="Manipulator"><svg class="ic"><use href="#axis"/></svg></button><button class="bl sq on" aria-label="Translate"><svg width="13" height="13"><use href="#arrowt"/></svg></button><button class="bl sq dk" aria-label="Rotate"><svg width="12" height="12"><use href="#arc"/></svg></button><button class="bl sq dk" aria-label="Scale"><svg width="12" height="12"><use href="#scl"/></svg></button><select class="bl w-orient" aria-label="Orientation"><option>Global</option></select></div>
    <div class="layers me-1"><button class="act" aria-label="Layer 1"></button><button aria-label="Layer 2"></button><button aria-label="Layer 3"></button><button aria-label="Layer 4"></button><button aria-label="Layer 5"></button><button aria-label="Layer 11"></button><button aria-label="Layer 12"></button><button aria-label="Layer 13"></button><button aria-label="Layer 14"></button><button aria-label="Layer 15"></button></div>
    <div class="layers me-1"><button aria-label="Layer 6"></button><button aria-label="Layer 7"></button><button aria-label="Layer 8"></button><button aria-label="Layer 9"></button><button aria-label="Layer 10"></button><button aria-label="Layer 16"></button><button aria-label="Layer 17"></button><button aria-label="Layer 18"></button><button aria-label="Layer 19"></button><button aria-label="Layer 20"></button></div>
    <button class="bl sq nar ms-1 me-1" aria-label="Lock"><svg width="12" height="12"><use href="#lock"/></svg></button>
    <button class="bl sq nar me-1" aria-label="Proportional"><svg width="12" height="12"><use href="#prop"/></svg></button>
    <div class="grp me-1"><button class="bl sq" aria-label="Snap"><svg width="12" height="12"><use href="#magnet"/></svg></button><button class="bl ed" aria-label="Snap element"><svg width="12" height="12"><use href="#sinc"/></svg></button><button class="bl sq" aria-label="Snap target"><svg width="12" height="12"><use href="#sgrid"/></svg></button></div>
    <div class="grp"><button class="bl sq" aria-label="Render"><svg width="12" height="12"><use href="#shot"/></svg></button><button class="bl sq" aria-label="Render animation"><svg width="12" height="12"><use href="#clap"/></svg></button></div>
    <i class="gripc bl0"></i>
  </div>

  <div class="areanode d-flex">
    <div class="canvas cover">
      <svg class="position-absolute top-0 start-0 overflow-visible" width="1" height="1"><path d="M295 73C335 73 370 69 414 69" fill="none" stroke="#111" stroke-width="3"/><path d="M295 73C335 73 370 69 414 69" fill="none" stroke="#ddd" stroke-width="1.200"/></svg>
      <button class="tagplus start-0">+</button>
      <div class="node n1">
        <div class="nt d-flex align-items-center"><svg><use href="#odn"/></svg>Emission</div>
        <div class="nbody">
          <span class="text-end pe-2">Emission</span>
          <div class="d-flex align-items-center gap-2"><button class="sw" aria-label="Color swatch"></button><span class="ps-1">Color</span></div>
          <label class="pill"><svg><use href="#al"/></svg>Strength:<input value="1.000"><svg><use href="#ar"/></svg></label>
        </div>
        <i class="sock out s1"></i><i class="sock y s2"></i><i class="sock g s3"></i>
      </div>
      <div class="node n2">
        <div class="nt o d-flex align-items-center"><svg><use href="#odn"/></svg>Material Output</div>
        <div class="nbody o"><span>Surface</span><span>Volume</span><span>Displacement</span></div>
        <i class="sock o1"></i><i class="sock o2"></i><i class="sock g o3"></i>
      </div>
      <span class="lbl mat">Material.001</span>
      <div class="th position-absolute vbar"></div>
      <div class="th h position-absolute hbar"></div>
    </div>
    <aside class="nside">
      <div class="ph no"><svg class="tri"><use href="#dn"/></svg>Node<i class="dots"></i></div>
      <div class="nfields">
        <div class="d-flex align-items-center"><label for="nn">Name:</label><div class="bl fld grow"><svg class="ic me-1"><use href="#nname"/></svg><input id="nn" class="border-0 bg-transparent p-0 w-100" value="Emission"></div></div>
        <div class="d-flex align-items-center"><label for="nl">Label:</label><div class="bl fld grow"><svg class="ic"><use href="#nname"/></svg><input id="nl" class="border-0 bg-transparent p-0 w-100"></div></div>
      </div>
      <div class="ph"><svg class="tri"><use href="#rt"/></svg><input type="checkbox" class="cb" id="cc"><label for="cc">Color</label><i class="dots"></i></div>
      <div class="ph"><svg class="tri"><use href="#dn"/></svg>Properties<i class="dots"></i></div>
      <div class="ninputs">
        <span class="ps-1">Inputs:</span>
        <div class="d-flex align-items-center gap-2"><button class="sw" aria-label="Color swatch"></button><span class="ps-1">Color</span></div>
        <label class="pill"><svg><use href="#al"/></svg>Strength:<input value="1.000" class="me-1"><svg><use href="#ar"/></svg></label>
      </div>
      <div class="ph position-relative"><svg class="tri"><use href="#dn"/></svg><input type="checkbox" class="cb" id="gp" checked><label for="gp">Grease Pencil Layers</label><i class="dots position-absolute end-0 me-1"></i></div>
      <div class="grp mx-1 mt-1"><button class="bl ed" aria-label="Layer data"><svg class="ic"><use href="#mat"/></svg></button><input class="bl fld grow" aria-label="Layer name"></div>
    </aside>
    <div class="nsb d-flex"><div class="sb flex-grow-1"><div class="th t2"></div></div></div>
  </div>

  <div class="hdr cut d-flex flex-shrink-0">
    <button class="bl ed" aria-label="Editor type"><svg class="ic"><use href="#nodes"/></svg></button>
    <nav class="menu d-flex"><a href="#">View</a><a href="#">Select</a><a href="#">Add</a><a href="#">Node</a></nav>
    <div class="grp me-1"><button class="bl sq on" aria-label="Shader"><svg width="13" height="13"><use href="#mat"/></svg></button><button class="bl sq dk" aria-label="Compositing"><svg width="12" height="12"><use href="#rl"/></svg></button><button class="bl sq dk" aria-label="Texture"><svg width="11" height="11"><use href="#tex"/></svg></button></div>
    <div class="grp me-1"><button class="bl sq on" aria-label="Object"><svg width="13" height="13"><use href="#ocube"/></svg></button><button class="bl sq dk" aria-label="World"><svg width="12" height="12" opacity=".6"><use href="#world"/></svg></button><button class="bl sq dk" aria-label="Line style"><svg width="12" height="12"><use href="#brush"/></svg></button></div>
    <div class="grp me-2"><button class="bl ed" aria-label="Material"><svg class="ic"><use href="#mat"/></svg></button><input class="bl fld w-name" value="Material.001" aria-label="Material name"><button class="bl sq wd">F</button><button class="bl sq" aria-label="Add"><svg width="11" height="11"><use href="#plus"/></svg></button><button class="bl sq" aria-label="Unlink"><svg width="11" height="11"><use href="#ex"/></svg></button></div>
    <input type="checkbox" class="cb me-1" id="un" checked><label for="un" class="text-white me-2 pt-1">Use Nodes</label>
    <button class="bl sq me-1 ms-1" aria-label="Pin"><svg class="ic"><use href="#pin"/></svg></button>
    <button class="bl sq off me-2" aria-label="Parent"><svg class="ic"><use href="#up"/></svg></button>
    <button class="bl sq dk me-1" aria-label="Auto offset"><svg class="ic"><use href="#bot"/></svg></button>
    <div class="grp me-2"><button class="bl sq" aria-label="Snap"><svg width="12" height="12"><use href="#magnet"/></svg></button><button class="bl ed" aria-label="Snap element"><svg width="13" height="13"><use href="#sgrid"/></svg></button></div>
    <div class="grp"><button class="bl sq" aria-label="Copy"><svg width="12" height="12"><use href="#paste"/></svg></button><button class="bl sq" aria-label="Paste"><svg width="12" height="12"><use href="#paste"/></svg></button></div>
  </div>
</section>

<section class="rightcol d-flex flex-column">
  <div class="areatree d-flex flex-column">
    <div class="hdr d-flex align-items-center flex-shrink-0 pe-0 border-0">
      <button class="bl ed me-1" aria-label="Editor type"><svg class="ic"><use href="#tree"/></svg></button>
      <nav class="menu d-flex ms-1"><a href="#">View</a><a href="#">Search</a></nav>
      <select class="bl me-1 w-all" aria-label="Display mode"><option>All Scenes</option></select>
      <div class="bl fld grow px-1 rounded-end-0 border-end-0"><svg class="ic"><use href="#mag"/></svg><input class="border-0 bg-transparent p-0 w-100" aria-label="Search"></div>
      <i class="gripc tr"></i>
    </div>
    <div class="cover d-flex flex-column" id="tree-rows"></div>
  </div>

  <div class="areaprops d-flex flex-column">
    <div class="hdr d-flex align-items-center flex-shrink-0 border-0">
      <button class="bl ed me-1" aria-label="Editor type"><svg class="ic"><use href="#props"/></svg></button>
      <div class="grp"><button class="bl sq dk wd" aria-label="Render"><svg width="12" height="12"><use href="#cam2"/></svg></button><button class="bl sq dk" aria-label="Render layers"><svg width="12" height="12" opacity=".8"><use href="#rl"/></svg></button><button class="bl sq dk wd" aria-label="Scene"><svg width="12" height="12" opacity=".8"><use href="#scene"/></svg></button><button class="bl sq dk wd" aria-label="World"><svg width="12" height="12" opacity=".7"><use href="#world"/></svg></button><button class="bl sq dk wd" aria-label="Object"><svg width="12" height="12" opacity=".8"><use href="#ocube"/></svg></button><button class="bl sq dk" aria-label="Constraints"><svg width="13" height="13"><use href="#chain"/></svg></button><button class="bl sq dk wd" aria-label="Modifiers"><svg width="12" height="12"><use href="#wrench"/></svg></button><button class="bl sq dk wd" aria-label="Data"><svg width="12" height="12"><use href="#meshl"/></svg></button><button class="bl sq on" aria-label="Material"><svg width="13" height="13"><use href="#mat"/></svg></button><button class="bl sq dk wd" aria-label="Texture"><svg width="10" height="10"><use href="#tex"/></svg></button><button class="bl sq dk" aria-label="Particles"><svg width="12" height="12"><use href="#part"/></svg></button><button class="bl sq dk wd" aria-label="Physics"><svg width="12" height="12"><use href="#phys"/></svg></button></div>
      <i class="gripc tr"></i>
    </div>
    <div class="cover d-flex overflow-hidden">
      <div class="pbody">
        <div class="d-flex slots">
          <div class="listbox flex-grow-1"><div class="item d-flex align-items-center gap-1"><i class="ball"></i>Material.001</div><div class="d-flex align-items-center"><svg width="9" height="9"><use href="#cp"/></svg><i class="mx-auto lines"></i></div></div>
          <div class="stackb sm"><button class="bl sq" aria-label="Add slot"><svg width="11" height="11"><use href="#plus"/></svg></button><button class="bl sq" aria-label="Remove slot"><svg width="11" height="11"><use href="#minus"/></svg></button><button class="bl sq dk" aria-label="Slot menu"><svg width="9" height="9"><use href="#dn"/></svg></button></div>
        </div>
        <div class="d-flex matrow"><div class="grp cover"><button class="bl ed" aria-label="Material"><svg class="ic"><use href="#mat"/></svg></button><input class="bl fld grow" value="Material.001" aria-label="Material name"><button class="bl sq wd">F</button><button class="bl sq" aria-label="Add"><svg width="11" height="11"><use href="#plus"/></svg></button><button class="bl sq" aria-label="Unlink"><svg width="11" height="11"><use href="#ex"/></svg></button></div><select class="bl w-data" aria-label="Link"><option>Data</option></select></div>
        <div class="ph"><svg class="tri"><use href="#rt"/></svg>Custom Properties<i class="dots"></i></div>
        <div class="ph"><svg class="tri"><use href="#rt"/></svg>Preview<i class="dots"></i></div>
        <div class="ph"><svg class="tri"><use href="#dn"/></svg>Surface<i class="dots"></i></div>
        <div class="frows">
          <div class="frow"><span class="fl">Surface:</span><button class="bl dk grow justify-content-between">Emission<svg width="6" height="6"><use href="#ring"/></svg></button></div>
          <div class="frow sp"><span class="fl ps-2">Color:</span><div class="grp cover"><button class="bl grow white" aria-label="Color"></button><button class="bl sq dk" aria-label="Color input"><svg width="6" height="6"><use href="#ring"/></svg></button></div></div>
          <div class="frow"><label class="fl ps-2" for="st">Strength:</label><div class="grp cover"><div class="pill half flex-grow-1"><svg><use href="#al"/></svg><input id="st" value="1.000"><svg><use href="#ar"/></svg></div><button class="bl sq dk" aria-label="Strength input"><svg width="6" height="6"><use href="#ring"/></svg></button></div></div>
        </div>
        <div class="ph"><svg class="tri"><use href="#rt"/></svg>Volume<i class="dots"></i></div>
        <div class="ph"><svg class="tri"><use href="#dn"/></svg>Displacement<i class="dots"></i></div>
        <div class="frows"><div class="frow"><span class="fl">Displacement:</span><button class="bl dk grow justify-content-between">Default<svg width="6" height="6"><use href="#ring"/></svg></button></div></div>
      </div>
      <div class="sb psb"><div class="th t3"></div></div>
    </div>
  </div>
</section>
</main>
<script src="https://cdn.jsdelivr.net/npm/bootstrap@5.3.0/dist/js/bootstrap.bundle.min.js"></script>
<script>
const NS='http://www.w3.org/2000/svg';
const add=(g,d)=>{const p=document.createElementNS(NS,'path');p.setAttribute('d',d);g.appendChild(p)};
// floor grid: 16 x 16 cells on a skewed plane
const fl=document.getElementById('floor');
for(let i=0;i<=16;i++){const t=i/16;
  add(fl,`M${227+148*t} ${199-93*t}l233 60`);
  add(fl,`M${227+233*t} ${199+60*t}l148 -93`);}
// cylinder side edges, 32 vertices
const cy=document.getElementById('cyl');
for(let k=0;k<32;k++){const a=(-1.4+11.25*k)*Math.PI/180,x=401.5+112.5*Math.sin(a),c=Math.cos(a);
  add(cy,`M${x} ${78-45*c}V${283.5-44.5*c}`);}
// outliner rows: name, icon, data icon, expander, row classes
const tr=document.getElementById('tree-rows');
const ic=(n,c='ic')=>`<svg class="${c}"><use href="#${n}"/></svg>`;
const cells=on=>'<span class="cells">'+[['eye','Visible'],['cursor','Selectable'],['cam','Renderable']].map(([n,l])=>on?`<button class="cell" aria-label="${l}">${ic(n)}</button>`:'<i class="cell"></i>').join('')+'</span>';
[['Scene','scenec','','cm','top',0],['RenderLayers','rl','rlc','cp','kid',0],['World','world','','','kid',0],
 ['Cylinder','meshc','meshd','cp','kid',1],['Hemi','lamp','hemi','cp','kid',1],['Qcriterion','mesh','meshd','cp','kid',1],['Surface','mesh','meshd','cp','kid sel last',1]
].forEach(([n,a,b,e,k,on])=>tr.insertAdjacentHTML('beforeend',
 `<div class="orow d-flex align-items-center ${k}">${ic(e||'none','ex')}${ic(a,'ic'+(k==='top'?' ms-1':''))}<a href="#" class="${n==='Cylinder'?'text-white':''}">${n}</a>${b?'<i class="bar"></i>'+ic(b):''}${cells(on)}</div>`));
for(let i=0;i<8;i++)tr.insertAdjacentHTML('beforeend',`<div class="orow d-flex ${i===7?'half':''}">${cells(0)}</div>`);
</script>
</body>
</html>
